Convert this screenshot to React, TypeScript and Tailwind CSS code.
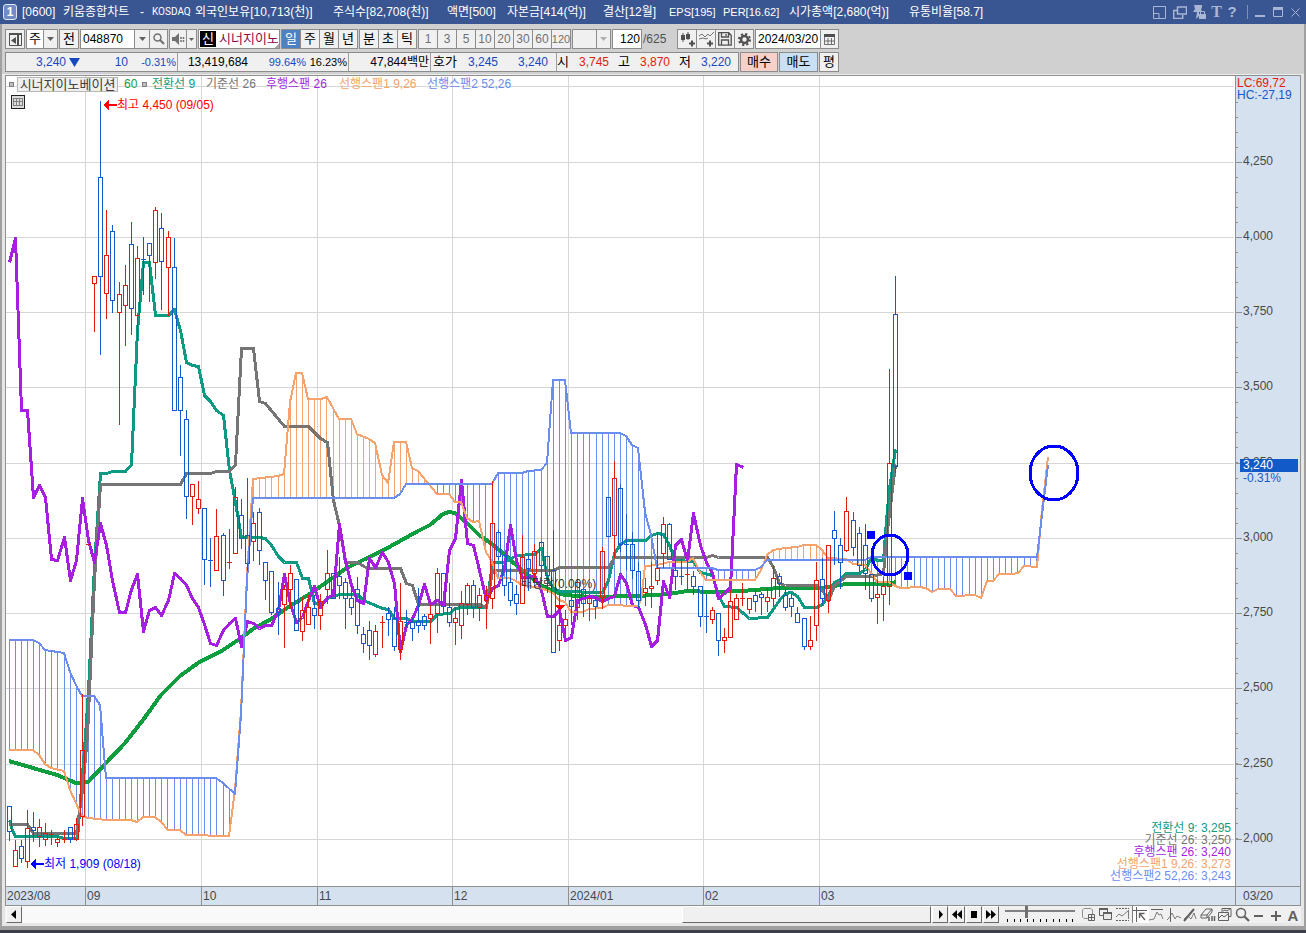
import type { ReactNode } from "react"
import clsx from "clsx"

type Point = [number, number]
// x, high, body top, body bottom, low, rising
type Candle = [number, number, number, number, number, 0 | 1]

const VIEW = { x: 6, y: 76, width: 1229, height: 810 }

const UP = "#e11b0c"
const DOWN = "#125ac8"
const TEAL = "#0c9a82"
const GRAY = "#757575"
const PURPLE = "#a61fe0"
const ORANGE = "#f5a26c"
const BLUE = "#6c8df0"
const GREEN = "#0f9d3e"

const candles: Candle[] = [
  [9, 806, 806, 831, 840, 0], [15, 840, 850, 866, 866, 1], [21, 840, 846, 858, 862, 0], [27, 810, 828, 861, 867, 1],
  [33, 812, 827, 830, 841, 0], [39, 819, 827, 836, 846, 1], [45, 823, 833, 839, 845, 1], [51, 830, 834, 834, 844, 1],
  [57, 837, 839, 842, 846, 1], [64, 830, 839, 839, 842, 1], [70, 827, 827, 839, 842, 0], [76, 818, 824, 839, 840, 1],
  [82, 694, 750, 816, 825, 1], [88, 544, 544, 544, 544, 1], [94, 276, 276, 283, 331, 1], [100, 101, 177, 276, 354, 0],
  [106, 210, 255, 293, 318, 1], [112, 225, 231, 300, 312, 0], [119, 282, 294, 312, 424, 1], [125, 265, 285, 305, 345, 1],
  [131, 222, 244, 308, 334, 0], [137, 246, 258, 315, 340, 1], [143, 237, 259, 259, 294, 0], [149, 243, 243, 255, 301, 0],
  [155, 207, 210, 262, 278, 1], [161, 213, 228, 261, 309, 0], [168, 231, 237, 267, 315, 1], [174, 238, 267, 410, 410, 0],
  [180, 365, 377, 410, 455, 0], [186, 410, 419, 496, 518, 0], [192, 484, 484, 496, 524, 1], [198, 481, 499, 508, 513, 1],
  [204, 508, 508, 559, 584, 0], [210, 538, 560, 560, 586, 0], [216, 509, 536, 570, 570, 1], [223, 533, 535, 580, 595, 0],
  [229, 529, 562, 562, 568, 1], [235, 487, 497, 553, 553, 1], [241, 499, 515, 538, 548, 0], [247, 478, 535, 563, 570, 0],
  [253, 512, 523, 541, 560, 1], [259, 508, 512, 550, 564, 0], [265, 562, 562, 580, 599, 0], [271, 571, 571, 612, 614, 0],
  [278, 582, 608, 612, 634, 0], [284, 585, 589, 604, 647, 1], [290, 565, 573, 589, 608, 1], [296, 579, 579, 630, 630, 0],
  [302, 597, 610, 631, 640, 1], [308, 595, 607, 624, 624, 1], [314, 595, 608, 615, 628, 0], [320, 594, 601, 615, 629, 1],
  [327, 550, 573, 589, 603, 1], [333, 573, 573, 598, 598, 0], [339, 557, 576, 585, 598, 0], [345, 578, 582, 598, 628, 0],
  [351, 586, 598, 607, 614, 0], [357, 577, 589, 625, 633, 0], [363, 627, 634, 643, 652, 0], [369, 621, 630, 645, 659, 0],
  [375, 625, 631, 654, 656, 1], [382, 616, 622, 622, 647, 1], [388, 607, 613, 619, 635, 0], [394, 607, 618, 646, 650, 0],
  [400, 583, 621, 649, 659, 1], [406, 610, 622, 622, 626, 0], [412, 618, 622, 628, 640, 0], [418, 588, 621, 625, 632, 0],
  [424, 614, 616, 625, 629, 0], [430, 605, 614, 618, 643, 1], [437, 568, 573, 613, 632, 1], [443, 573, 573, 606, 614, 0],
  [449, 583, 607, 622, 626, 0], [455, 607, 618, 622, 644, 1], [461, 591, 603, 625, 638, 1], [467, 583, 585, 604, 614, 1],
  [473, 580, 585, 607, 617, 0], [479, 588, 595, 607, 620, 1], [486, 586, 595, 600, 628, 1], [492, 481, 523, 598, 608, 1],
  [498, 530, 532, 556, 559, 0], [504, 554, 555, 585, 595, 0], [510, 568, 582, 600, 605, 0], [516, 585, 594, 603, 614, 0],
  [522, 535, 557, 603, 603, 1], [528, 555, 559, 568, 590, 0], [534, 544, 551, 573, 581, 1], [541, 541, 542, 565, 583, 0],
  [547, 556, 556, 575, 592, 0], [553, 530, 570, 652, 652, 0], [559, 592, 625, 640, 650, 1], [565, 610, 619, 625, 641, 1],
  [571, 593, 600, 606, 624, 0], [577, 579, 582, 607, 619, 1], [583, 588, 589, 603, 616, 0], [589, 594, 598, 603, 620, 1],
  [595, 596, 600, 606, 618, 0], [602, 547, 551, 597, 608, 1], [608, 497, 497, 536, 536, 0], [614, 461, 478, 535, 557, 1],
  [620, 484, 488, 544, 551, 0], [626, 514, 544, 544, 569, 0], [632, 532, 544, 570, 578, 0], [638, 562, 571, 600, 607, 0],
  [645, 578, 588, 592, 605, 1], [651, 562, 586, 588, 607, 1], [657, 532, 568, 580, 584, 1], [663, 517, 524, 553, 567, 1],
  [669, 523, 524, 559, 559, 0], [675, 560, 570, 576, 589, 0], [681, 559, 576, 576, 584, 0], [687, 560, 574, 574, 589, 1],
  [693, 571, 576, 586, 594, 0], [700, 586, 586, 616, 626, 0], [706, 594, 616, 616, 632, 0], [712, 607, 610, 619, 623, 1],
  [718, 613, 613, 640, 655, 0], [724, 628, 637, 640, 652, 1], [730, 590, 601, 637, 637, 1], [736, 594, 598, 619, 619, 1],
  [742, 583, 598, 598, 605, 1], [749, 598, 598, 609, 613, 1], [755, 590, 595, 601, 611, 0], [761, 592, 594, 597, 614, 0],
  [767, 588, 597, 601, 611, 1], [773, 565, 578, 598, 605, 1], [779, 573, 576, 583, 596, 0], [785, 589, 595, 607, 610, 0],
  [791, 594, 598, 606, 616, 0], [797, 607, 613, 622, 622, 0], [804, 618, 618, 646, 649, 0], [810, 616, 640, 646, 649, 1],
  [816, 562, 580, 625, 640, 1], [822, 558, 579, 598, 604, 0], [828, 545, 545, 600, 612, 1], [834, 511, 530, 538, 564, 0],
  [840, 538, 545, 562, 588, 0], [846, 497, 511, 550, 551, 1], [853, 512, 520, 547, 555, 0], [859, 527, 533, 565, 571, 0],
  [865, 524, 545, 573, 589, 0], [871, 574, 574, 598, 601, 0], [877, 580, 594, 597, 623, 1], [883, 577, 586, 594, 620, 1],
  [889, 369, 463, 586, 604, 1], [895, 276, 314, 466, 472, 0],
]

const lagging: Point[] = [
  [9, 262], [15, 238], [21, 410], [27, 410], [33, 497], [39, 485], [45, 497], [51, 559], [57, 560], [64, 537], [70, 580],
  [76, 560], [82, 498], [88, 540], [94, 562], [100, 523], [106, 545], [112, 580], [119, 612], [125, 612], [131, 589],
  [137, 574], [143, 631], [149, 610], [155, 607], [161, 615], [168, 600], [174, 573], [180, 578], [186, 585], [192, 598],
  [198, 607], [204, 624], [210, 643], [216, 645], [223, 630], [229, 623], [235, 618], [241, 646], [247, 621], [253, 623],
  [259, 628], [265, 625], [271, 625], [278, 610], [284, 574], [290, 604], [296, 622], [302, 617], [308, 600], [314, 586],
  [320, 607], [327, 597], [333, 595], [339, 524], [345, 560], [351, 585], [357, 600], [363, 603], [369, 558], [375, 567],
  [382, 552], [388, 562], [394, 583], [400, 651], [406, 625], [412, 618], [418, 605], [424, 584], [430, 604], [437, 600],
  [443, 605], [449, 550], [455, 538], [461, 480], [467, 543], [473, 545], [479, 570], [486, 600], [492, 588], [498, 585],
  [504, 568], [510, 525], [516, 560], [522, 577], [528, 577], [534, 575], [541, 590], [547, 616], [553, 616], [559, 610],
  [565, 640], [571, 637], [577, 600], [583, 598], [589, 596], [595, 597], [602, 601], [608, 598], [614, 596], [620, 574],
  [626, 583], [632, 605], [638, 607], [645, 624], [651, 646], [657, 640], [663, 581], [669, 597], [675, 545], [681, 539],
  [687, 560], [693, 513], [700, 545], [706, 562], [712, 573], [718, 598], [724, 593], [730, 587], [736, 464], [743, 467],
]

const conversion: Point[] = [
  [9, 820], [12, 830], [15, 836], [57, 836], [64, 838], [77, 838], [80, 800], [85, 735], [88, 690], [94, 565], [100, 473],
  [106, 473], [112, 471], [125, 471], [131, 464], [137, 330], [143, 262], [149, 262], [155, 315], [168, 315], [174, 309],
  [180, 330], [186, 362], [192, 365], [198, 366], [204, 395], [210, 401], [216, 410], [223, 415], [229, 470], [235, 502],
  [241, 537], [259, 537], [265, 538], [271, 545], [278, 556], [284, 562], [296, 562], [302, 578], [308, 578], [314, 603],
  [320, 604], [327, 598], [339, 594], [357, 594], [363, 600], [375, 605], [382, 608], [388, 609], [394, 618], [406, 618],
  [412, 621], [430, 621], [437, 614], [449, 613], [455, 608], [461, 607], [486, 607], [492, 562], [504, 562], [516, 555],
  [534, 554], [541, 548], [547, 578], [553, 588], [559, 591], [602, 592], [608, 580], [614, 553], [620, 544], [626, 540],
  [645, 540], [651, 535], [657, 533], [663, 534], [669, 545], [675, 560], [693, 561], [700, 572], [712, 575], [718, 595],
  [724, 606], [736, 607], [749, 618], [767, 617], [779, 600], [785, 593], [791, 592], [797, 596], [804, 607], [816, 607],
  [822, 604], [828, 595], [834, 582], [840, 579], [846, 573], [859, 573], [865, 569], [871, 557], [877, 560], [883, 560],
  [886, 520], [889, 488], [895, 449],
]

const base: Point[] = [
  [9, 824], [27, 824], [33, 833], [76, 833], [82, 790], [87, 735], [94, 580], [100, 484], [180, 484], [186, 473], [210, 473],
  [216, 471], [229, 471], [235, 464], [241, 348], [253, 348], [259, 401], [265, 403], [284, 426], [308, 426], [320, 438],
  [327, 442], [333, 500], [339, 525], [345, 562], [357, 562], [367, 568], [400, 568], [406, 583], [412, 585], [418, 604],
  [479, 604], [486, 607], [492, 570], [553, 570], [559, 567], [608, 567], [614, 557], [706, 557], [712, 555], [718, 557],
  [767, 557], [773, 567], [779, 583], [785, 585], [816, 585], [822, 590], [828, 600], [834, 585], [846, 576], [871, 576],
  [883, 573], [887, 530], [895, 464],
]

const average: Point[] = [
  [9, 761], [33, 768], [57, 775], [76, 783], [88, 782], [106, 763], [125, 743], [143, 720], [161, 695], [180, 676],
  [198, 663], [223, 650], [241, 638], [253, 629], [271, 619], [290, 606], [308, 595], [327, 582], [345, 569], [363, 560],
  [382, 551], [400, 541], [418, 531], [430, 525], [443, 514], [449, 512], [455, 513], [467, 523], [479, 535], [492, 544],
  [504, 554], [516, 565], [528, 575], [541, 585], [553, 591], [565, 595], [590, 597], [638, 596], [669, 594], [687, 591],
  [712, 592], [742, 591], [779, 588], [822, 588], [846, 584], [889, 584], [896, 582],
]

const spanA: Point[] = [
  [9, 750], [33, 750], [39, 755], [45, 764], [51, 768], [64, 771], [70, 790], [76, 803], [82, 816], [88, 818], [106, 820],
  [131, 820], [137, 822], [143, 817], [155, 817], [161, 822], [168, 830], [180, 830], [186, 835], [229, 836], [235, 790],
  [241, 710], [247, 575], [253, 479], [278, 476], [284, 474], [290, 402], [296, 373], [302, 373], [308, 399], [321, 399],
  [327, 397], [333, 408], [339, 419], [351, 419], [357, 434], [369, 439], [375, 443], [382, 475], [388, 483], [394, 442],
  [406, 442], [412, 468], [418, 471], [437, 494], [449, 494], [455, 502], [461, 502], [467, 518], [473, 522], [479, 521],
  [486, 552], [492, 562], [498, 578], [510, 578], [516, 581], [522, 585], [541, 588], [553, 593], [559, 600], [565, 602],
  [571, 612], [583, 612], [589, 609], [602, 608], [608, 605], [638, 606], [641, 600], [645, 566], [657, 565], [669, 562],
  [687, 562], [693, 558], [700, 572], [706, 580], [755, 580], [761, 570], [767, 555], [773, 550], [785, 548], [797, 547],
  [804, 545], [816, 545], [822, 550], [828, 558], [846, 559], [853, 564], [865, 565], [871, 573], [877, 582], [889, 582],
  [895, 586], [901, 588], [919, 587], [926, 588], [932, 592], [938, 589], [950, 589], [956, 596], [975, 595], [981, 598],
  [987, 581], [993, 581], [999, 574], [1012, 574], [1018, 573], [1024, 566], [1037, 567], [1042, 510], [1048, 457],
]

const spanB: Point[] = [
  [9, 640], [33, 640], [39, 643], [45, 650], [64, 653], [70, 672], [76, 685], [82, 696], [94, 696], [100, 705], [106, 778],
  [216, 778], [223, 783], [235, 794], [241, 715], [247, 580], [253, 498], [394, 498], [400, 494], [406, 484], [492, 484],
  [498, 473], [522, 473], [528, 471], [541, 470], [547, 463], [553, 380], [565, 380], [571, 433], [620, 433], [626, 436],
  [632, 445], [638, 448], [645, 512], [651, 535], [657, 568], [712, 568], [718, 570], [755, 570], [761, 567], [767, 560],
  [865, 560], [871, 557], [1037, 557], [1042, 515], [1048, 465],
]

const months = [
  { x: 6, label: "2023/08" },
  { x: 85, label: "09" },
  { x: 201, label: "10" },
  { x: 317, label: "11" },
  { x: 452, label: "12" },
  { x: 568, label: "2024/01" },
  { x: 703, label: "02" },
  { x: 819, label: "03" },
]

const prices = [
  { y: 162, label: "4,250" },
  { y: 237, label: "4,000" },
  { y: 312, label: "3,750" },
  { y: 387, label: "3,500" },
  { y: 463, label: "3,250" },
  { y: 538, label: "3,000" },
  { y: 613, label: "2,750" },
  { y: 688, label: "2,500" },
  { y: 764, label: "2,250" },
  { y: 839, label: "2,000" },
]

const valueAt = (line: Point[], x: number) => {
  const next = line.findIndex(([px]) => px >= x)
  if (next <= 0) return line[0][1]
  const [x0, y0] = line[next - 1]
  const [x1, y1] = line[next]
  return y0 + ((y1 - y0) * (x - x0)) / (x1 - x0)
}

const place = (x: number, y: number) => ({
  left: `${((x - VIEW.x) / VIEW.width) * 100}%`,
  top: `${((y - VIEW.y) / VIEW.height) * 100}%`,
})

const Line = ({ data, color, width }: { data: Point[]; color: string; width: number }) => {
  // odd widths sit on the pixel centre, even ones on its edge
  const shift = width % 2 ? 0.5 : 0
  return (
    <polyline
      points={data.map(([x, y]) => `${x + shift},${y + shift}`).join(" ")}
      fill="none"
      stroke={color}
      strokeWidth={width}
      strokeLinejoin="round"
    />
  )
}

const Cloud = () => (
  <g>
    {Array.from({ length: 170 }, (_, i) => {
      const x = 9 + Math.floor(6.115 * i)
      const a = Math.round(valueAt(spanA, x))
      const b = Math.round(valueAt(spanB, x))
      return <rect key={i} x={x} y={Math.min(a, b)} width={1} height={Math.abs(a - b)} fill={a < b ? ORANGE : BLUE} />
    })}
  </g>
)

const Candles = () => (
  <g>
    {candles.map(([x, high, top, bottom, low, rising]) => {
      const color = rising ? UP : DOWN
      return (
        <g key={x} fill={color}>
          <rect x={x} y={high} width={1} height={top - high} />
          <rect x={x} y={bottom} width={1} height={low - bottom + 1} />
          {bottom - top < 2 ? (
            <rect x={x - 2} y={top} width={5} height={1} />
          ) : (
            <rect x={x - 1.5} y={top + 0.5} width={4} height={bottom - top} fill="none" stroke={color} />
          )}
        </g>
      )
    })}
  </g>
)

const Plot = () => (
  <svg
    className="absolute inset-0 w-full h-full"
    viewBox={`${VIEW.x} ${VIEW.y} ${VIEW.width} ${VIEW.height}`}
    preserveAspectRatio="none"
    shapeRendering="crispEdges"
  >
    <g fill="#d6d6d6">
      <rect x={6} y={86} width={1228} height={1} />
      {prices.map((p) => <rect key={p.y} x={6} y={p.y} width={1228} height={1} />)}
      {months.slice(1).map((m) => <rect key={m.x} x={m.x} y={76} width={1} height={810} />)}
    </g>
    <Cloud />
    <Line data={average} color={GREEN} width={4} />
    <Line data={conversion} color={TEAL} width={3} />
    <Line data={base} color={GRAY} width={3} />
    <Line data={lagging} color={PURPLE} width={3} />
    <Line data={spanA} color={ORANGE} width={2} />
    <Line data={spanB} color={BLUE} width={2} />
    <Candles />
    <path d="M554 605h11l-5 6z" fill="#ff0000" />
    <path d="M103 105l6-6v5h8v2h-8v5z" fill="#ff0000" />
    <path d="M30 864l6-6v5h8v2h-8v5z" fill="#0000ff" />
    <g fill="none" stroke="#0000ff" strokeWidth={3}>
      <ellipse cx={890} cy={555} rx={18} ry={20} />
      <ellipse cx={1054} cy={473} rx={24} ry={27} />
    </g>
    <rect x={867} y={531} width={8} height={8} fill="#0000ff" />
    <rect x={904} y={572} width={8} height={8} fill="#0000ff" />
  </svg>
)

const Legend = () => (
  <div className="absolute left-[3px] top-0 flex items-center h-4 whitespace-nowrap">
    <i className="w-[5px] h-[5px] border border-[#808080] bg-[#c0c0c0]" />
    <span className="w-[101px] h-[15px] ml-[3px] border border-[#b8b8b8] bg-[#efefef] text-[13px] leading-[13px] text-center text-[#404040]">
      시너지이노베이션
    </span>
    <span className="w-[18px] ml-[6px] text-[#0f9d3e]">60</span>
    <i className="w-[5px] h-[5px] mr-[5px] border border-[#808080] bg-[#c0c0c0]" />
    <span className="w-[54px] text-[#0c9a82]">전환선 9</span>
    <span className="w-[60px] text-[#757575]">기준선 26</span>
    <span className="w-[73px] text-[#a61fe0]">후행스팬 26</span>
    <span className="w-[88px] text-[#f5a26c]">선행스팬1 9,26</span>
    <span className="text-[#6c8df0]">선행스팬2 52,26</span>
  </div>
)

const PriceAxis = () => (
  <div className="relative w-16 bg-[#d6e1ef] text-[#484848]">
    <svg
      className="absolute inset-0 w-full h-full"
      viewBox="0 76 64 810"
      preserveAspectRatio="none"
      shapeRendering="crispEdges"
      fill="#909090"
    >
      {prices.map((p) => <rect key={p.y} x={0} y={p.y} width={6} height={1} />)}
      {Array.from({ length: 50 }, (_, i) => (
        <rect key={i} x={0} y={Math.floor(102 + i * 15.04)} width={2} height={1} />
      ))}
    </svg>
    <div className="absolute left-px top-px leading-3">
      <p className="text-[#e11b0c]">LC:69,72</p>
      <p className="text-[#125ac8]">HC:-27,19</p>
    </div>
    {prices.map((p) => (
      <span key={p.y} className="absolute left-[7px] leading-4 -translate-y-1/2" style={{ top: place(0, p.y - 1).top }}>
        {p.label}
      </span>
    ))}
    <div className="absolute left-1 right-[2px] leading-3" style={{ top: place(0, 459).top }}>
      <p className="h-[13px] pl-[3px] leading-[13px] bg-[#125ac8] text-white">3,240</p>
      <p className="pl-[3px] text-[#125ac8]">-0.31%</p>
    </div>
  </div>
)

const ChartPanel = () => (
  <div className="flex-1 min-h-0 mx-[3px] flex border border-b-0 border-[#909090]">
    <div className="relative flex-1 bg-white border-r border-[#909090]">
      <Plot />
      <Legend />
      <button aria-label="표 보기" className="absolute left-[5px] top-[19px] w-[14px] h-[14px] border border-[#202020] bg-[#dcdcdc]">
        <svg viewBox="0 0 12 12" className="w-3 h-3" shapeRendering="crispEdges" fill="none" stroke="#808080">
          <path d="M1 2.500h10M1 5.500h10M1 9.500h10M1.500 2v8M4.500 2v8M7.500 2v8M10.500 2v8" />
        </svg>
      </button>
      <span className="absolute leading-4 -translate-y-1/2 text-[#ff0000]" style={place(117, 105)}>최고 4,450 (09/05)</span>
      <span className="absolute leading-4 -translate-y-1/2 text-[#0000ff]" style={place(44, 864)}>최저 1,909 (08/18)</span>
      <span className="absolute leading-4 -translate-y-1/2 text-[#303030]" style={place(521, 584)}>배당락(0.00%)</span>
      <div className="absolute right-1 bottom-1 text-right leading-3">
        <p className="text-[#0c9a82]">전환선 9: 3,295</p>
        <p className="text-[#757575]">기준선 26: 3,250</p>
        <p className="text-[#a61fe0]">후행스팬 26: 3,240</p>
        <p className="text-[#f5a26c]">선행스팬1 9,26: 3,273</p>
        <p className="text-[#6c8df0]">선행스팬2 52,26: 3,243</p>
      </div>
    </div>
    <PriceAxis />
  </div>
)

const TimeAxis = () => (
  <div className="flex h-5 mx-[3px] border border-[#909090] bg-[#d6e1ef] text-[#484848] leading-[18px]">
    <div className="flex flex-1">
      {months.map((m, i) => {
        const end = months[i + 1]?.x ?? VIEW.x + VIEW.width
        return (
          <span
            key={m.x}
            className={clsx("pl-px", i > 0 && "border-l border-[#909090]")}
            style={{ width: `${((end - m.x) / VIEW.width) * 100}%` }}
          >
            {m.label}
          </span>
        )
      })}
    </div>
    <span className="w-[65px] pl-[7px] border-l border-[#909090]">03/20</span>
  </div>
)

const Icon = ({ children, w = 16, h = 16 }: { children: ReactNode; w?: number; h?: number }) => (
  <svg width={w} height={h} viewBox={`0 0 ${w} ${h}`} fill="none" stroke="currentColor" className="shrink-0">
    {children}
  </svg>
)

const TitleBar = () => (
  <header className="flex items-center h-6 pl-[3px] pr-[6px] bg-[#3a5692] text-white whitespace-nowrap">
    <span className="w-[14px] h-4 border border-[#dfe6f4] rounded-[3px] bg-[#6f8cc4] text-center font-bold leading-[14px]">1</span>
    <h1 className="flex-1 ml-[5px] flex items-center gap-[6px] overflow-hidden">
      <span className="w-[35px]">[0600]</span>
      <span className="w-[71px]">키움종합차트</span>
      <span className="w-[6px]">-</span>
      <span className="w-[37px] font-[Roboto] text-[10px]">KOSDAQ</span>
      <span className="w-[132px]">외국인보유[10,713(천)]</span>
      <span className="w-[108px]">주식수[82,708(천)]</span>
      <span className="w-[54px]">액면[500]</span>
      <span className="w-[90px]">자본금[414(억)]</span>
      <span className="w-[60px]">결산[12월]</span>
      <span className="w-[48px] text-[11px]">EPS[195]</span>
      <span className="w-[60px] text-[11px]">PER[16.62]</span>
      <span className="w-[114px]">시가총액[2,680(억)]</span>
      <span>유통비율[58.7]</span>
    </h1>
    <div className="flex items-center text-[#a9b6d6]">
      <button aria-label="창 크기" className="w-[20px]">
        <Icon w={13} h={13}><path d="M.5 12.500v-12h12v12zM1 7.500h5v5" /></Icon>
      </button>
      <button aria-label="창 복제" className="w-[20px]">
        <Icon w={14} h={13}><path d="M4.500 1h9v7h-9zM4 4.500H.7v8h9V9" strokeWidth="1.500" /></Icon>
      </button>
      <button aria-label="고정" className="w-[16px]">
        <Icon w={14} h={14}>
          <path d="M1 0h8v2l-1 3 2 2H6v4l-3 3 1-7H0l2-3z" fill="currentColor" stroke="none" />
          <path d="M6 9h7v5H6z" fill="currentColor" stroke="none" />
          <path d="M7.500 9V6.500h4V9" />
        </Icon>
      </button>
      <button aria-label="글꼴" className="w-[15px] font-[Liberation_Serif] font-bold text-[16px] leading-4">T</button>
      <button aria-label="도움말" className="w-[16px] font-bold text-[15px] leading-4">?</button>
      <i className="w-px h-[14px] mx-[7px] bg-[#7f90b8]" />
      <button aria-label="최소화" className="w-[18px]">
        <Icon w={10} h={12}><path d="M0 10h10" strokeWidth="2" /></Icon>
      </button>
      <button aria-label="최대화" className="w-[18px]">
        <Icon w={10} h={10}><path d="M.5 .5h9v9h-9z" /><path d="M0 1.500h10" strokeWidth="3" /></Icon>
      </button>
      <button aria-label="닫기">
        <Icon w={9} h={9}><path d="M.5 .5l8 8M8.500 .5l-8 8" /></Icon>
      </button>
    </div>
  </header>
)

const Box = ({ children, className }: { children: ReactNode; className: string }) => (
  <div className={clsx("flex h-5 shrink-0 border border-[#8c8c8c] bg-[#f0f0f0] divide-x divide-[#8c8c8c]", className)}>
    {children}
  </div>
)

const cell = "flex items-center justify-center h-full overflow-hidden"

const Arrow = ({ light }: { light?: boolean }) => (
  <svg width="7" height="4" viewBox="0 0 7 4" className={light ? "fill-[#b0b0b0]" : "fill-[#606060]"}>
    <path d="M0 0h7L3.500 4z" />
  </svg>
)

const Toolbar = () => (
  <div className="flex gap-px whitespace-nowrap text-black">
    <Box className="w-5">
      <button aria-label="메뉴" className={clsx(cell, "w-full text-[#505050]")}>
        <Icon w={13} h={13}>
          <path d="M.5 1.500h12v11H.5z" />
          <path d="M0 1h13" strokeWidth="2" />
          <path d="M9 2v10" strokeWidth="2" />
          <path d="M7 4v7L2 7.500z" fill="currentColor" stroke="none" />
        </Icon>
      </button>
    </Box>
    <Box className="w-8">
      <button className={clsx(cell, "w-[17px] bg-white text-[13px]")}>주</button>
      <button aria-label="구분 선택" className={clsx(cell, "flex-1")}><Arrow /></button>
    </Box>
    <Box className="w-5"><button className={clsx(cell, "w-full text-[13px]")}>전</button></Box>
    <Box className="w-[88px]">
      <input aria-label="종목코드" defaultValue="048870" className="w-[54px] pl-[2px] bg-white outline-none" />
      <button aria-label="종목 목록" className={clsx(cell, "w-[15px]")}><Arrow /></button>
      <button aria-label="종목 검색" className={clsx(cell, "flex-1 text-[#707070]")}>
        <Icon w={12} h={12}><circle cx="4.500" cy="4.500" r="3.500" strokeWidth="1.500" /><path d="M7 7l4 4" strokeWidth="2" /></Icon>
      </button>
    </Box>
    <Box className="w-7">
      <button aria-label="음성" className={clsx(cell, "w-[17px] text-[#707070]")}>
        <Icon w={13} h={12}>
          <path d="M0 4h3l4-4v12L3 8H0z" fill="currentColor" stroke="none" />
          <path d="M9 4v5M11.500 4v5" strokeWidth="1.500" strokeDasharray="2 1" />
        </Icon>
      </button>
      <button aria-label="음성 설정" className={clsx(cell, "flex-1")}>
        <svg width="5" height="3" viewBox="0 0 5 3" fill="#606060"><path d="M0 0h5L2.500 3z" /></svg>
      </button>
    </Box>
    <Box className="w-[82px] bg-white! divide-x-0!">
      <b className="w-4 h-4 m-px bg-black text-white text-[13px] leading-4 text-center font-normal">신</b>
      <input
        aria-label="종목명"
        defaultValue="시너지이노"
        className="w-[62px] pl-[2px] text-[13px] text-[#8a0a4a] outline-none bg-linear-[135deg,white_95%,#a8a8a8_95%]"
      />
    </Box>
    <Box className="w-[77px]">
      {["일", "주", "월", "년"].map((t, i) => (
        <button key={t} className={clsx(cell, "flex-1 text-[13px]", i === 0 && "bg-[#4a82c4] text-white")}>{t}</button>
      ))}
    </Box>
    <Box className="w-[58px]">
      {["분", "초", "틱"].map((t) => <button key={t} className={clsx(cell, "flex-1 text-[13px]")}>{t}</button>)}
    </Box>
    <Box className="w-[153px]">
      {["1", "3", "5", "10", "20", "30", "60", "120"].map((t) => (
        <button key={t} className={clsx(cell, "flex-1 w-0 text-[#707070]", t === "120" && "text-[11px]")}>{t}</button>
      ))}
    </Box>
    <Box className="w-[39px]">
      <span className="w-6" />
      <button aria-label="주기 선택" className={clsx(cell, "flex-1")}><Arrow light /></button>
    </Box>
    <Box className="w-[30px]">
      <input aria-label="표시 개수" defaultValue="120" className="w-full pr-px bg-white text-right outline-none" />
    </Box>
    <span className="w-[33px] leading-5 text-[#505050]">/625</span>
    <Box className="w-[77px] text-[#505050]">
      <button aria-label="차트 유형" className={clsx(cell, "flex-1")}>
        <Icon w={15} h={15}>
          <path d="M3 1v9M8 0v8" />
          <path d="M1 3h4v5H1zM6 2h4v5H6z" fill="currentColor" stroke="none" />
          <path d="M9 11.500h6M12 8.500v6" strokeWidth="2" />
        </Icon>
      </button>
      <button aria-label="지표 추가" className={clsx(cell, "flex-1")}>
        <Icon w={15} h={15}>
          <path d="M0 4l3-2 3 3 3-3 2 2 4-4M0 7l4-1 3 1 2-1" strokeWidth=".8" />
          <path d="M8 11.500h6M11 8.500v6" strokeWidth="2" />
        </Icon>
      </button>
      <button aria-label="저장" className={clsx(cell, "flex-1")}>
        <Icon w={14} h={14}><path d="M.7.700h10l2.500 2.500v10H.7zM3.500 1v4h7V1M3.500 13V8h7v5M8 2v2" strokeWidth="1.300" /></Icon>
      </button>
      <button aria-label="설정" className={clsx(cell, "flex-1")}>
        <Icon w={13} h={13}>
          <circle cx="6.500" cy="6.500" r="3.500" strokeWidth="2.500" />
          <circle cx="6.500" cy="6.500" r="5.500" strokeWidth="2" strokeDasharray="2.200 2.120" />
        </Icon>
      </button>
    </Box>
    <Box className="w-[84px]">
      <input aria-label="날짜" defaultValue="2024/03/20" className="w-[65px] pl-[2px] bg-white outline-none" />
      <button aria-label="달력" className={clsx(cell, "flex-1 text-[#505050]")}>
        <Icon w={11} h={11}><path d="M.5 2v8.500h10V2M4 4v6M7.500 4v6M1 7h9" strokeWidth=".8" /><path d="M0 1.500h11" strokeWidth="3" /></Icon>
      </button>
    </Box>
  </div>
)

const Bar = ({ className }: { className: string }) => <i className={clsx("w-px h-full bg-[#a0a0a0]", className)} />

const Quotes = () => (
  <div className="flex gap-px whitespace-nowrap text-right leading-[18px] text-black">
    <div className="flex w-[734px] h-5 shrink-0 border border-[#8c8c8c] bg-[#f0f0f0]">
      <span className="w-[60px] text-[#1748c0]">3,240</span>
      <svg width="14" height="18" viewBox="0 0 14 18" fill="#1748c0"><path d="M3 5h11L8.500 14z" /></svg>
      <span className="w-[48px] text-[#1748c0]">10</span>
      <span className="w-[48px] text-[11px] text-[#1748c0]">-0.31%</span>
      <Bar className="ml-px" />
      <span className="w-[70px]">13,419,684</span>
      <span className="w-[58px] text-[11px] text-[#1748c0]">99.64%</span>
      <span className="w-[41px] text-[11px]">16.23%</span>
      <Bar className="ml-px" />
      <span className="w-[80px]">47,844백만</span>
      <Bar className="ml-px" />
      <span className="w-[26px] text-[13px]">호가</span>
      <span className="w-[41px] text-[#1748c0]">3,245</span>
      <span className="w-[50px] text-[#1748c0]">3,240</span>
      <Bar className="ml-[8px]" />
      <span className="w-[12px] text-[13px]">시</span>
      <span className="w-[40px] text-[#e11b0c]">3,745</span>
      <span className="w-[21px] text-[13px]">고</span>
      <span className="w-[40px] text-[#e11b0c]">3,870</span>
      <span className="w-[21px] text-[13px]">저</span>
      <span className="w-[40px] text-[#1748c0]">3,220</span>
    </div>
    <button className="w-[38px] h-5 border border-[#8c8c8c] bg-[#f7d0ca] text-[13px] text-center">매수</button>
    <button className="w-[39px] h-5 border border-[#8c8c8c] bg-[#c8dff4] text-[13px] text-center">매도</button>
    <button className="w-5 h-5 border border-[#8c8c8c] bg-[#f0f0f0] text-[13px] text-center">평</button>
  </div>
)

const ScrollButton = ({ label, d }: { label: string; d: string }) => (
  <button
    aria-label={label}
    className="flex items-center justify-center w-4 h-[17px] shrink-0 border border-t-white border-l-white border-r-[#696969] border-b-[#696969] bg-[#f0f0f0]"
  >
    <svg width="10" height="9" viewBox="0 0 10 9" fill="black"><path d={d} /></svg>
  </button>
)

const tools: { label: string; icon: ReactNode; active?: boolean }[] = [
  { label: "창 추가", icon: <><path d="M7 11.500H3L1.500 10V3L3 1.500h7L11.500 3v4" stroke="#909090" /><path d="M7.500 7.500h6v6h-6zM7.500 10.500h6M10.500 7.500v6" /></> },
  { label: "창 겹치기", icon: <><path d="M1.500 1.500h8v7h-8z" /><path d="M5.500 5.500h8v7h-8z" fill="#e8e8e8" /><path d="M1 2h9M5 6h9" strokeWidth="2" /></> },
  { label: "구간", icon: <><path d="M1 1.500h13M1 13.500h13" strokeDasharray="2 1" /><path d="M1 10l3-3 3 2 6-5M13.500 3v9" strokeWidth=".8" /></> },
  { label: "추세", icon: <><path d="M0 3.500h14M3.500 0v15" /><path d="M12 13L7 7M6.500 11V6.500h5" strokeWidth="1.300" /></>, active: true },
  { label: "수평선", icon: <><path d="M2 2.500h12" /><path d="M0 13l5-1 3-7 2 3 2-1 2 5" strokeWidth=".8" /></> },
  { label: "수직선", icon: <><path d="M4.500 1v14" /><path d="M1 13l2-2 3-5 3 6 2-3 4 2" strokeWidth=".8" /></> },
  { label: "추세선", icon: <><path d="M1 14L11 2" strokeWidth="2" /><path d="M1 12l4-3 3 3 3-6 2 6" strokeWidth=".8" /></> },
  { label: "지우기", icon: <><path d="M1 8l5-6h6l-5 6zM1 8v3h6V8M7 11l5-6V2" /><path d="M9 10v4M12 9v5M14.500 9v5" strokeWidth="1.500" /></> },
  { label: "비교", icon: <path d="M5 5V1.500h9v8h-2M1.500 5.500h10v8h-10zM2 11l3-3 2 2 4-3M6 4l2-1 2 1 3-2" /> },
  { label: "확대경", icon: <><circle cx="7" cy="6" r="4.500" strokeWidth="1.500" /><path d="M10 9l5 5" strokeWidth="2.200" /></> },
  { label: "축소", icon: <path d="M3 9h9" strokeWidth="2" /> },
  { label: "확대", icon: <path d="M3 9h10M8 4v10" strokeWidth="2" /> },
]

const BottomBar = () => (
  <div className="flex h-[17px] mx-[3px] pl-px bg-[#f0f0f0]">
    <ScrollButton label="왼쪽으로" d="M7 0v9L2 4.500z" />
    <div className="flex flex-1 bg-[#f9f9f9]">
      <div className="flex-[8]" />
      <div className="flex-[3] mr-px border border-t-white border-l-white border-r-[#696969] border-b-[#696969] bg-[#f0f0f0]" />
    </div>
    <div className="flex gap-px">
      <ScrollButton label="오른쪽으로" d="M4 0v9l4-4.500z" />
      <ScrollButton label="뒤로" d="M5 0v9L0 4.500zM10 0v9L5 4.500z" />
      <ScrollButton label="정지" d="M2 1h6v7H2z" />
      <ScrollButton label="앞으로" d="M0 0v9l5-4.500zM5 0v9l5-4.500z" />
    </div>
    <div className="w-[70px] ml-[6px]">
      <input
        type="range"
        aria-label="확대 비율"
        defaultValue={30}
        className="block w-full h-3 appearance-none bg-linear-[transparent_4px,#808080_4px,#808080_6px,transparent_6px] [&::-webkit-slider-thumb]:appearance-none [&::-webkit-slider-thumb]:w-[3px] [&::-webkit-slider-thumb]:h-3 [&::-webkit-slider-thumb]:bg-[#707070]"
      />
      <div className="flex justify-between px-[2px] pt-px">
        {Array.from({ length: 11 }, (_, i) => <i key={i} className="w-px h-[3px] bg-black" />)}
      </div>
    </div>
    <div className="flex ml-[6px] text-[#606060]">
      {tools.map((t) => (
        <button key={t.label} aria-label={t.label} className={clsx("w-[17px] h-[17px]", t.active && "bg-white border-l border-[#808080]")}>
          <Icon>{t.icon}</Icon>
        </button>
      ))}
      <button className="w-4 h-[17px] text-[15px] leading-[19px] font-bold">A</button>
    </div>
  </div>
)

export default function App() {
  return (
    <div className="flex flex-col h-screen bg-[#3c3f48] font-['Liberation_Sans','Noto_Sans_CJK_KR',sans-serif] text-xs">
      <TitleBar />
      <main className="flex flex-col flex-1 min-h-0 mb-[3px] border-x-2 border-b-4 border-[#a0a0a0] bg-[#e6e6e6] pb-[3px]">
        <div className="flex flex-col gap-[3px] pl-[3px] pt-[5px] pb-[2px] border-b border-[#ececec] bg-[#d0d0d0]">
          <Toolbar />
          <Quotes />
        </div>
        <ChartPanel />
        <TimeAxis />
        <BottomBar />
      </main>
    </div>
  )
}
